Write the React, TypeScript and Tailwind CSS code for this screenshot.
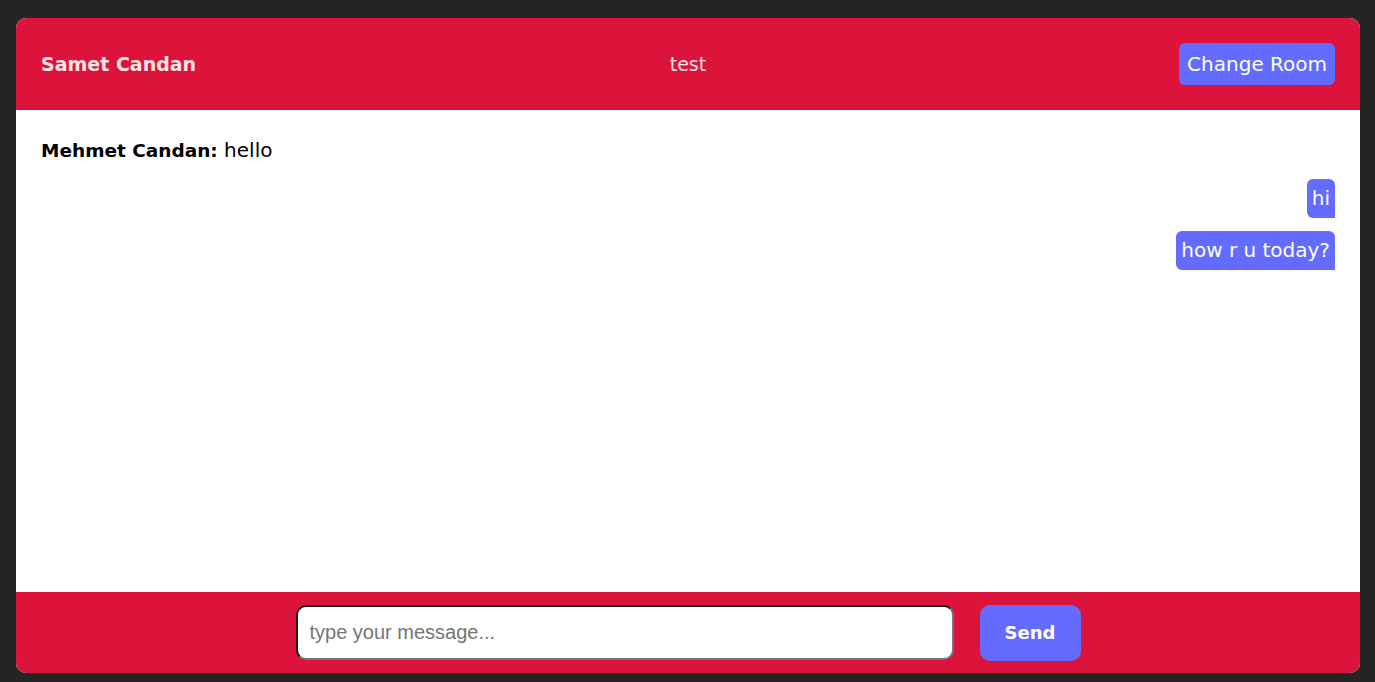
import React from "react";

const font = { fontFamily: '"DejaVu Sans", "Open Sans", sans-serif' };

export default function App() {
  return (
    <div className="min-h-[682px] w-full bg-[#242424] pt-[18px] pl-[16px] pr-[15px] pb-[9px]" style={font}>
      <div className="flex h-[655px] flex-col overflow-hidden rounded-[10px] bg-white">
        <header className="grid h-[92px] grid-cols-3 items-center bg-[#dc143c] px-[25px] text-[#ffe4e1]">
          <div className="text-[19px] font-bold">Samet Candan</div>
          <div className="text-center text-[19px]">test</div>
          <div className="flex justify-end">
            <button className="h-[42px] rounded-[6px] bg-[#646cff] px-[8px] text-[20px] text-white">Change Room</button>
          </div>
        </header>
        <main className="flex flex-1 flex-col px-[25px] pt-[25px] text-[20px] text-black">
          <div className="leading-[30px]">
            <span className="text-[18.5px] font-bold">Mehmet Candan:</span> hello
          </div>
          <div className="mt-[13px] flex flex-col items-end gap-[13px]">
            <div className="rounded-l-[6px] rounded-tr-[6px] bg-[#646cff] px-[5px] py-[4px] leading-[31px] text-white">hi</div>
            <div className="rounded-l-[6px] rounded-tr-[6px] bg-[#646cff] px-[5px] py-[4px] leading-[31px] text-white">how r u today?</div>
          </div>
        </main>
        <footer className="flex h-[81px] items-center justify-center gap-[26px] bg-[#dc143c]">
          <input
            placeholder="type your message..."
            className="h-[55px] w-[658px] rounded-[10px] border-2 border-t-[#1a1a1a] border-l-[#1a1a1a] border-b-[#767676] border-r-[#767676] bg-white px-[12px] text-[20px] text-black outline-none placeholder:text-[#757575]"
            style={{ fontFamily: '"Liberation Sans", Arial, sans-serif' }}
          />
          <button className="h-[56px] w-[101px] rounded-[10px] bg-[#646cff] text-[18px] font-bold text-white">Send</button>
        </footer>
      </div>
    </div>
  );
}
